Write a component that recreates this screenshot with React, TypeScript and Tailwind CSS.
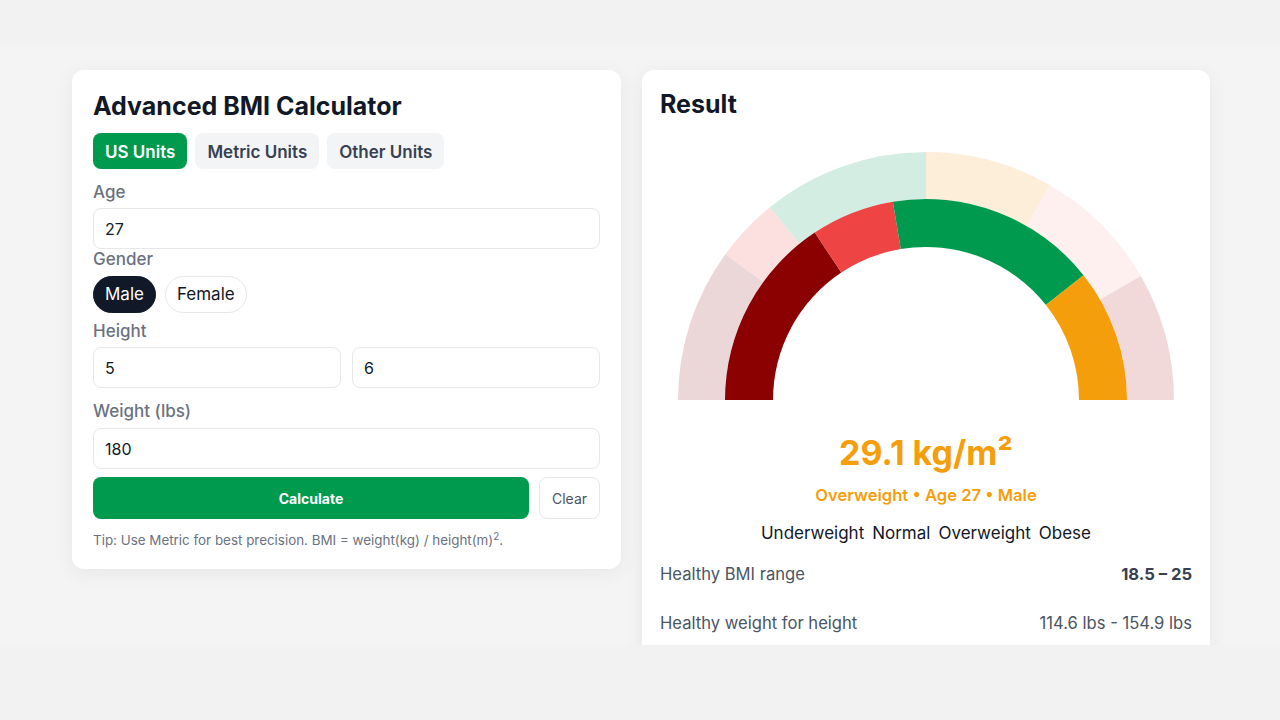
import React, { useState } from 'react';

type Seg = { from: number; to: number; color: string };

// outer light ring (BMI bands), angles in degrees, 180 = left, 0 = right
const outerSegs: Seg[] = [
  { from: 180, to: 144, color: '#ebd7d7' },
  { from: 144, to: 129, color: '#fce0e0' },
  { from: 129, to: 90, color: '#d4ede2' },
  { from: 90, to: 60, color: '#fdeed9' },
  { from: 60, to: 30, color: '#fff0f0' },
  { from: 30, to: 0, color: '#f1d9da' },
];

const innerSegs: Seg[] = [
  { from: 180, to: 123.6, color: '#8b0000' },
  { from: 123.6, to: 99.5, color: '#ef4444' },
  { from: 99.5, to: 38.4, color: '#009a4f' },
  { from: 38.4, to: 0, color: '#f59e0b' },
];

const CX = 248;
const CY = 248;

function pt(r: number, deg: number) {
  const a = (deg * Math.PI) / 180;
  return `${(CX + r * Math.cos(a)).toFixed(2)} ${(CY - r * Math.sin(a)).toFixed(2)}`;
}

function arcPath(r0: number, r1: number, from: number, to: number) {
  const large = from - to > 180 ? 1 : 0;
  return [
    `M ${pt(r1, from)}`,
    `A ${r1} ${r1} 0 ${large} 1 ${pt(r1, to)}`,
    `L ${pt(r0, to)}`,
    `A ${r0} ${r0} 0 ${large} 0 ${pt(r0, from)}`,
    'Z',
  ].join(' ');
}

function Gauge() {
  return (
    <svg width="496" height="248" viewBox="0 0 496 248" className="block mx-auto">
      {outerSegs.map((s, i) => (
        <path key={'o' + i} d={arcPath(201, 248, s.from, s.to)} fill={s.color} />
      ))}
      {innerSegs.map((s, i) => (
        <path key={'i' + i} d={arcPath(153, 201, s.from, s.to)} fill={s.color} />
      ))}
    </svg>
  );
}

const inputCls =
  'w-full h-[41px] rounded-lg border border-[#e5e7eb] bg-white px-[11px] text-[16px] text-[#111827] outline-none';

export default function App() {
  const [unit, setUnit] = useState<'us' | 'metric' | 'other'>('us');
  const [gender, setGender] = useState<'male' | 'female'>('male');

  const tab = (key: 'us' | 'metric' | 'other', label: string) => (
    <button
      onClick={() => setUnit(key)}
      className={`h-9 px-3 pt-[3px] rounded-lg text-[17px] font-semibold ${
        unit === key ? 'bg-[#009a4f] text-white' : 'bg-[#f3f4f6] text-[#374151]'
      }`}
    >
      {label}
    </button>
  );

  const pill = (key: 'male' | 'female', label: string) => (
    <button
      onClick={() => setGender(key)}
      className={`h-[37px] px-[11px] rounded-full text-[17px] border ${
        gender === key
          ? 'bg-[#111827] border-[#111827] text-white'
          : 'bg-white border-[#e5e7eb] text-[#111827]'
      }`}
    >
      {label}
    </button>
  );

  return (
    <div className="min-h-screen bg-[#f2f2f2] pt-[45px] font-['Inter',sans-serif]">
      <div className="h-[600px] bg-[#f4f4f4] overflow-hidden">
        <div className="flex items-start gap-[21px] pl-[72px] pt-[25px]">
          {/* Calculator card */}
          <div className="w-[549px] bg-white rounded-xl shadow-[0_4px_20px_rgba(0,0,0,0.06)] px-[21px] pt-[20px] pb-[20px]">
            <h1 className="text-[25px] leading-8 font-bold text-[#111827]">Advanced BMI Calculator</h1>
            <div className="flex gap-2 mt-[11px]">
              {tab('us', 'US Units')}
              {tab('metric', 'Metric Units')}
              {tab('other', 'Other Units')}
            </div>

            <div className="mt-[13px] text-[17px] leading-5 font-medium text-[#6b7280]">Age</div>
            <input className={`${inputCls} mt-[6px]`} defaultValue="27" />

            <div className="text-[17px] leading-5 font-medium text-[#6b7280]">Gender</div>
            <div className="flex gap-[9px] mt-[7px]">
              {pill('male', 'Male')}
              {pill('female', 'Female')}
            </div>

            <div className="mt-2 text-[17px] leading-5 font-medium text-[#6b7280]">Height</div>
            <div className="grid grid-cols-2 gap-[11px] mt-[6px]">
              <input className={inputCls} defaultValue="5" />
              <input className={inputCls} defaultValue="6" />
            </div>

            <div className="mt-[13px] text-[17px] leading-5 font-medium text-[#6b7280]">Weight (lbs)</div>
            <input className={`${inputCls} mt-[7px]`} defaultValue="180" />

            <div className="flex gap-[10px] mt-2">
              <button className="flex-1 h-[42px] rounded-lg bg-[#009a4f] text-white text-[14px] font-bold">
                Calculate
              </button>
              <button className="w-[61px] h-[42px] rounded-lg border border-[#e5e7eb] bg-white text-[14px] text-[#4b5563]">
                Clear
              </button>
            </div>

            <p className="mt-3 text-[13.4px] leading-[18px] text-[#6b7280]">
              Tip: Use Metric for best precision. BMI = weight(kg) / height(m)<sup>2</sup>.
            </p>
          </div>

          {/* Result card */}
          <div className="w-[568px] bg-white rounded-xl shadow-[0_4px_20px_rgba(0,0,0,0.06)] px-[18px] pt-[18px] pb-6">
            <h2 className="text-[25px] leading-8 font-bold text-[#111827]">Result</h2>
            <div className="mt-[32px]">
              <Gauge />
            </div>
            <div className="mt-[33px] text-center text-[34px] leading-10 font-bold text-[#f59e0b]">
              29.1 kg/m²
            </div>
            <div className="mt-[10px] text-center text-[16.6px] leading-6 font-semibold text-[#f59e0b]">
              Overweight • Age 27 • Male
            </div>
            <div className="mt-[14px] flex justify-center gap-2 text-[17px] leading-6 text-[#111827]">
              <span>Underweight</span>
              <span>Normal</span>
              <span>Overweight</span>
              <span>Obese</span>
            </div>
            <div className="mt-[5px]">
              <div className="flex items-center justify-between h-[48px]">
                <span className="text-[16.6px] text-[#4b5563]">Healthy BMI range</span>
                <span className="text-[16.6px] font-bold text-[#374151]">18.5 – 25</span>
              </div>
              <div className="flex items-center justify-between h-[50px]">
                <span className="text-[16.6px] text-[#4b5563]">Healthy weight for height</span>
                <span className="text-[16.6px] text-[#4b5563]">114.6 lbs - 154.9 lbs</span>
              </div>
            </div>
          </div>
        </div>
      </div>
    </div>
  );
}
